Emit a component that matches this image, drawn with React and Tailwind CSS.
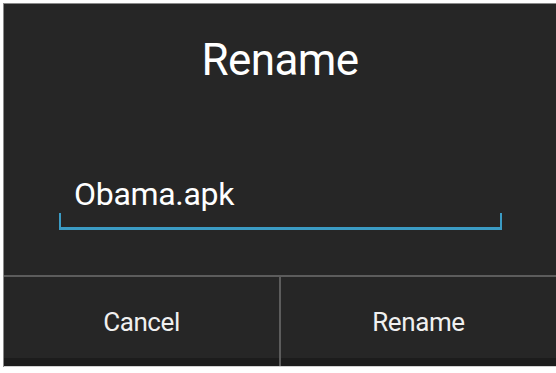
import React from "react";

export default function App() {
  const font = { fontFamily: "Roboto, 'Noto Sans', sans-serif" };
  return (
    <div className="w-[556px] h-[373px] bg-white pt-[3px] pl-[3px] pb-[6px]" style={font}>
      <div className="h-full flex flex-col bg-[#262626] border-t border-l border-[#8a8a8a]">
        <div className="pt-[34px] h-[78px] text-center text-white text-[44px] leading-[44px] tracking-[-0.6px]">
          Rename
        </div>
        <div className="mt-[96px] ml-[55px] mr-[54px]">
          <div className="pl-[15px] text-white text-[32px] leading-[32px] h-[32px] tracking-[-0.3px]">Obama.apk</div>
          <div className="mt-[3px] h-[17px] border-l-2 border-r-2 border-b-[3px] border-[#3b9bc4]" />
        </div>
        <div className="flex-1" />
        <div className="h-[91px] flex border-t-2 border-[#5c5c5c]">
          <div className="flex-1 flex flex-col">
            <div className="flex-1 flex items-center justify-center text-[#f0f0f0] text-[26px] pt-[10px] tracking-[-0.4px]">Cancel</div>
            <div className="h-[8px] bg-[#1c1c1c]" />
          </div>
          <div className="w-[2px] bg-[#5c5c5c]" />
          <div className="flex-1 flex flex-col">
            <div className="flex-1 flex items-center justify-center text-[#f0f0f0] text-[26px] pt-[10px] tracking-[-0.4px]">Rename</div>
            <div className="h-[8px] bg-[#1c1c1c]" />
          </div>
        </div>
        <div className="h-px bg-[#d0d0d0]" />
      </div>
    </div>
  );
}
